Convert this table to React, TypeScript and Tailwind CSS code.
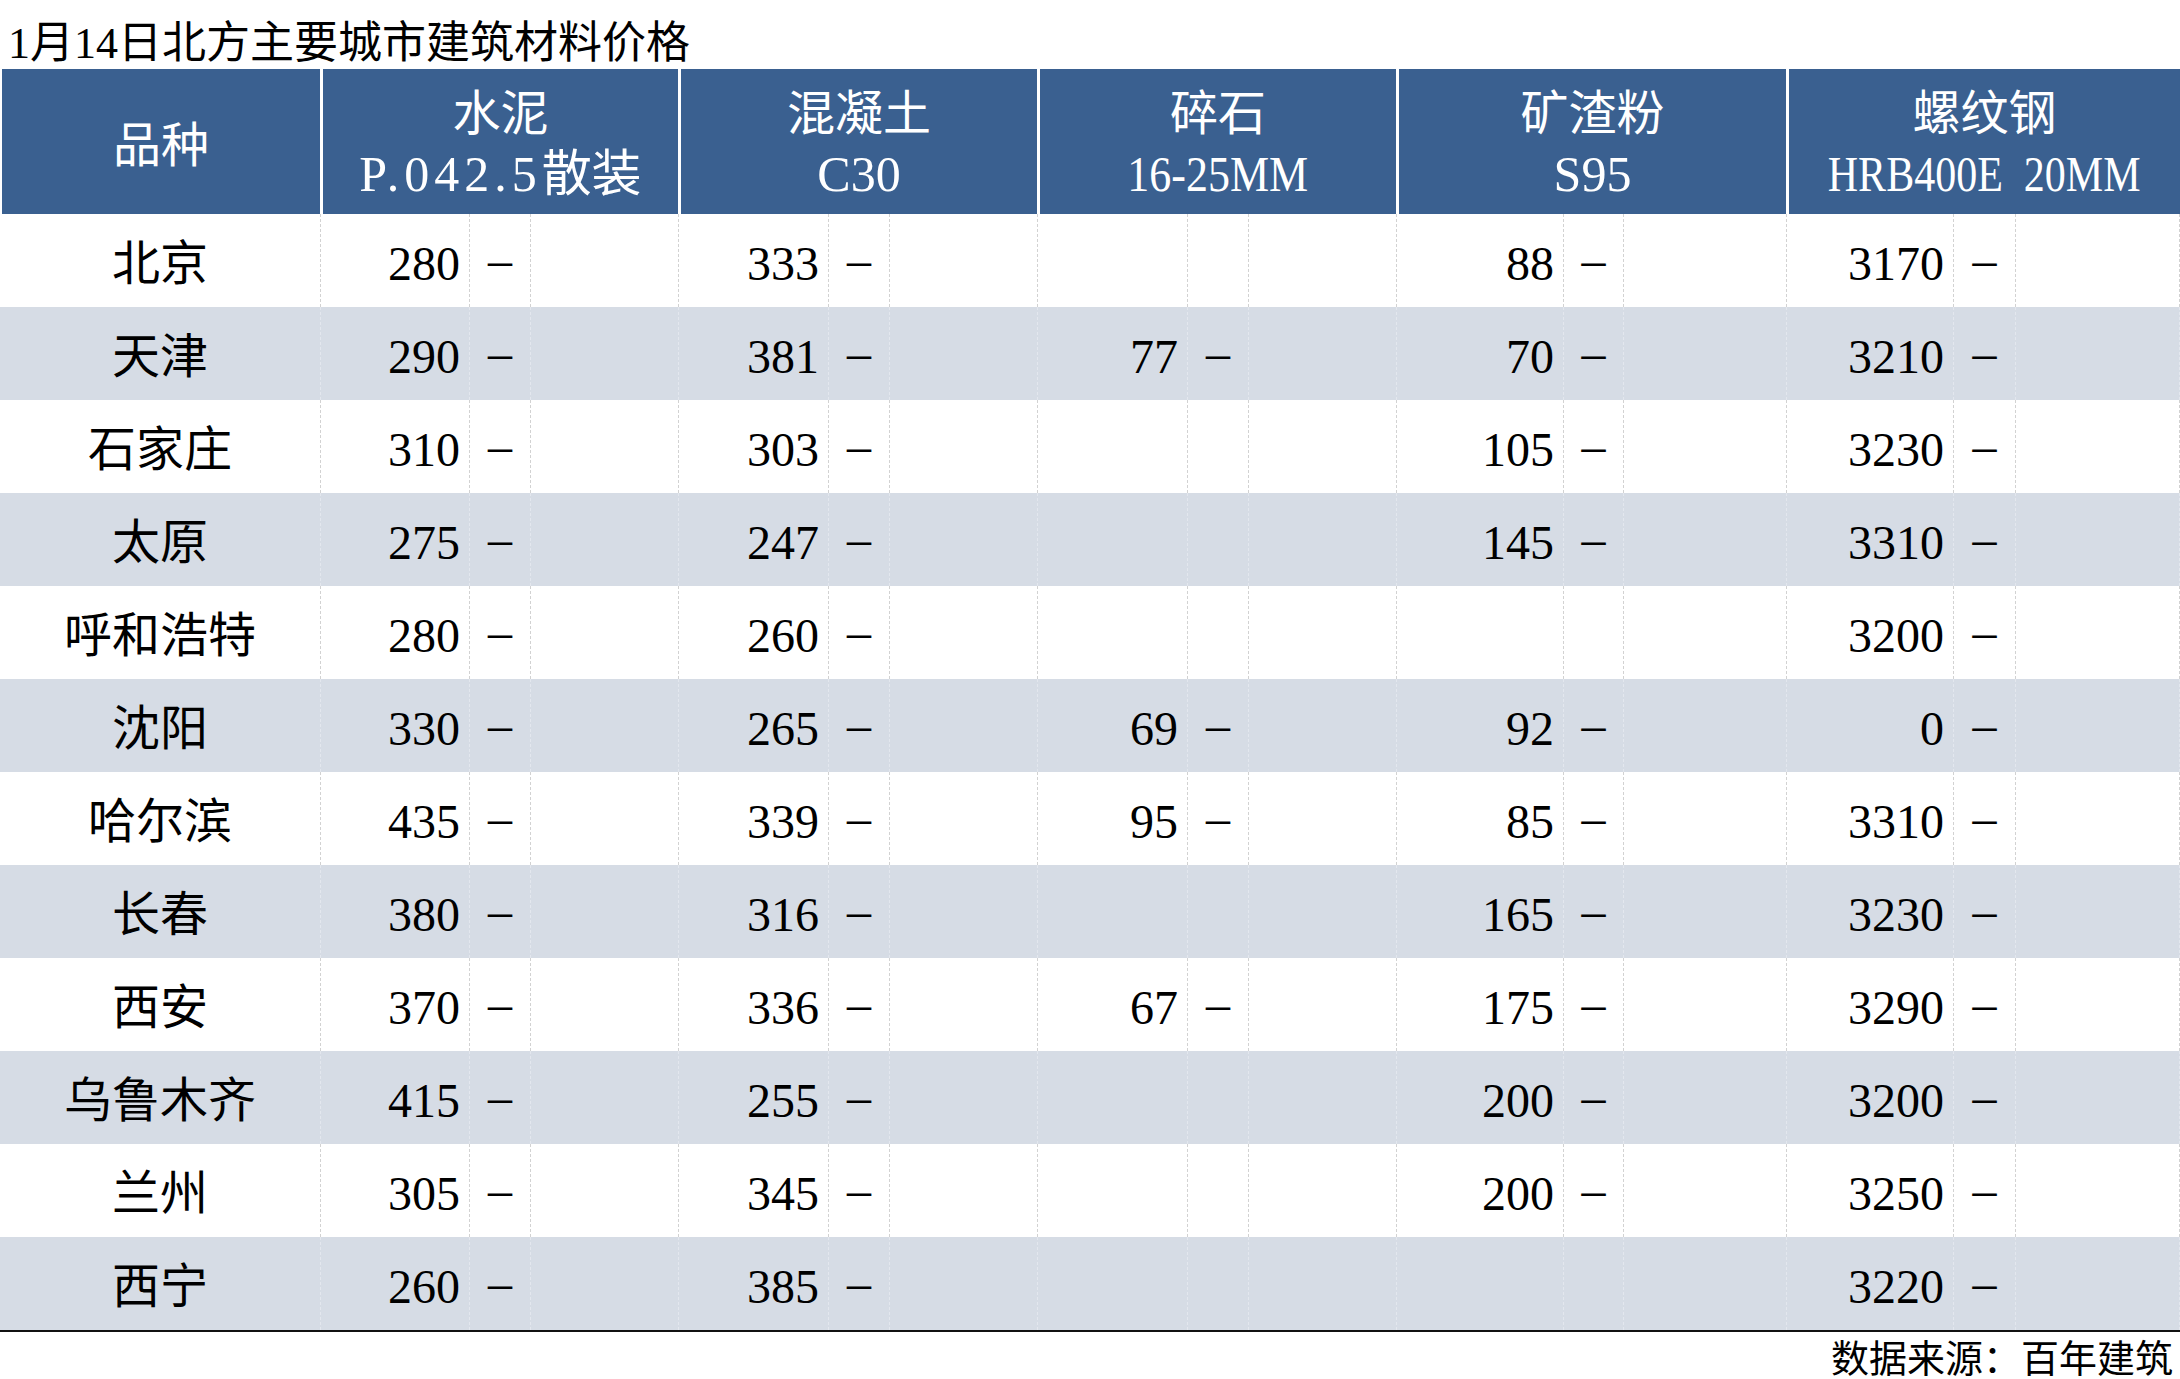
import React from "react";

// 1月14日北方主要城市建筑材料价格 table
const FONT = "'Liberation Serif', 'Noto Sans CJK SC', serif";

type Row = [string, string, string, string, string, string];

const rows: Row[] = [
  ["北京", "280", "333", "", "88", "3170"],
  ["天津", "290", "381", "77", "70", "3210"],
  ["石家庄", "310", "303", "", "105", "3230"],
  ["太原", "275", "247", "", "145", "3310"],
  ["呼和浩特", "280", "260", "", "", "3200"],
  ["沈阳", "330", "265", "69", "92", "0"],
  ["哈尔滨", "435", "339", "95", "85", "3310"],
  ["长春", "380", "316", "", "165", "3230"],
  ["西安", "370", "336", "67", "175", "3290"],
  ["乌鲁木齐", "415", "255", "", "200", "3200"],
  ["兰州", "305", "345", "", "200", "3250"],
  ["西宁", "260", "385", "", "", "3220"],
];

// spec line uses a narrow/half-width look in the source, so nudge each one
const headers: { name: string; spec: React.ReactNode }[] = [
  {
    name: "水泥",
    spec: (
      <>
        <span className="tracking-[5px]">P.042.5</span>散装
      </>
    ),
  },
  { name: "混凝土", spec: "C30" },
  { name: "碎石", spec: <span className="inline-block scale-x-[0.88]">16-25MM</span> },
  { name: "矿渣粉", spec: "S95" },
  { name: "螺纹钢", spec: <span className="inline-block scale-x-[0.84]">HRB400E  20MM</span> },
];

const ValueCells = ({ value, shaded, last }: { value: string; shaded: boolean; last?: boolean }) => {
  const line = shaded ? "border-[#e3e7ee]" : "border-[#d2d2d2]";
  return (
    <>
      <div className={`flex items-center justify-end pr-[9px] pt-[6px] border-l border-dashed ${line}`}>
        {value}
      </div>
      <div className={`flex items-center justify-center pb-[2px] border-l border-dashed ${line}`}>
        {value ? "–" : ""}
      </div>
      <div className={`border-l border-dashed ${line} ${last ? "border-r" : ""}`} />
    </>
  );
};

export default function App() {
  return (
    <div className="w-[2180px] h-[1379px] bg-white text-black overflow-hidden" style={{ fontFamily: FONT }}>
      {/* title */}
      <div className="h-[69px] flex items-end pl-[8px] pb-[3px] text-[44px] leading-none">
        1月14日北方主要城市建筑材料价格
      </div>

      {/* header */}
      <div className="grid grid-cols-[320px_358px_359px_359px_390px_394px] h-[145px] text-white text-[48px]">
        <div className="bg-[#3a6090] border-l-[2px] border-white flex items-center justify-center pt-[8px]">
          品种
        </div>
        {headers.map((h) => (
          <div
            key={h.name}
            className="bg-[#3a6090] border-l-[3px] border-white flex flex-col items-center justify-center leading-[61px] pt-[4px]"
          >
            <span>{h.name}</span>
            <span className="whitespace-pre text-[50px]">{h.spec}</span>
          </div>
        ))}
      </div>

      {/* body */}
      <div className="border-b-[2px] border-[#111]">
        {rows.map((r, i) => {
          const shaded = i % 2 === 1;
          return (
            <div
              key={r[0]}
              className={`grid grid-cols-[320px_149px_61px_148px_150px_61px_148px_150px_61px_148px_167px_60px_163px_167px_62px_165px] h-[93px] text-[48px] leading-none ${
                shaded ? "bg-[#d6dce5]" : "bg-white"
              }`}
            >
              <div className="flex items-center justify-center pt-[6px]">{r[0]}</div>
              <ValueCells value={r[1]} shaded={shaded} />
              <ValueCells value={r[2]} shaded={shaded} />
              <ValueCells value={r[3]} shaded={shaded} />
              <ValueCells value={r[4]} shaded={shaded} />
              <ValueCells value={r[5]} shaded={shaded} last />
            </div>
          );
        })}
      </div>

      {/* source */}
      <div className="flex justify-end pr-[7px] pt-[8px] text-[38px] leading-none">数据来源：百年建筑</div>
    </div>
  );
}
